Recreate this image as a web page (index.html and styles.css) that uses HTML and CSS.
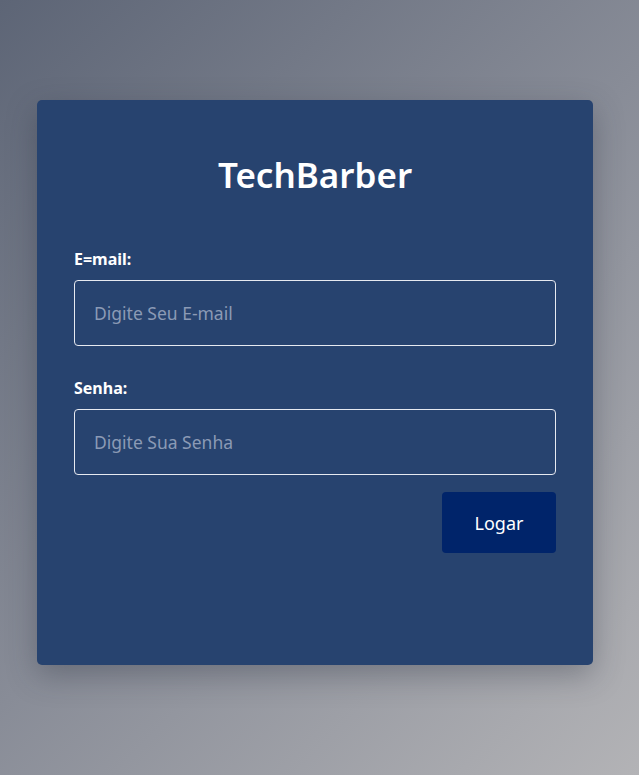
FILE: index.html
```html
<!DOCTYPE html>
<html lang="pt-BR">
<head>
<meta charset="utf-8">
<title>TechBarber</title>
<link rel="stylesheet" href="styles.css">
</head>
<body>
<main class="page">
  <form class="card">
    <h1 class="title">TechBarber</h1>
    <div class="field">
      <label class="label" for="email">E=mail:</label>
      <input class="input" id="email" type="text" placeholder="Digite Seu E-mail">
    </div>
    <div class="field">
      <label class="label" for="senha">Senha:</label>
      <input class="input" id="senha" type="password" placeholder="Digite Sua Senha">
    </div>
    <div class="actions">
      <button class="button" type="button">Logar</button>
    </div>
  </form>
</main>
</body>
</html>
```

FILE: styles.css
```css
html, body {
  margin: 0;
  height: 100%;
}
body {
  font-family: "Noto Sans", "Open Sans", sans-serif;
  background: linear-gradient(135deg, #5d6576 0%, #888c97 50%, #b3b3b6 100%);
  background-attachment: fixed;
}
.page {
  box-sizing: border-box;
  min-height: 100vh;
  padding: 100px 0 0 37px;
}
.card {
  box-sizing: border-box;
  width: 556px;
  height: 565px;
  background: #27436f;
  border-radius: 5px;
  box-shadow: 0 10px 30px rgba(40, 45, 60, 0.35);
  padding: 48px 37px 0 37px;
  display: flex;
  flex-direction: column;
}
.title {
  margin: 0 0 47px 0;
  text-align: center;
  color: #ffffff;
  font-size: 35px;
  font-weight: 600;
  line-height: 54px;
}
.field {
  display: flex;
  flex-direction: column;
  margin-bottom: 32px;
}
.label {
  color: #ffffff;
  font-size: 16px;
  font-weight: 700;
  line-height: 20px;
  margin-bottom: 11px;
}
.input {
  box-sizing: border-box;
  width: 100%;
  height: 66px;
  border: 1px solid #e6e9f0;
  border-radius: 4px;
  background: transparent;
  padding: 0 19px;
  font-family: inherit;
  font-size: 17.5px;
  color: #ffffff;
  outline: none;
}
.input::placeholder {
  color: #8b9ab5;
}
.actions {
  display: flex;
  justify-content: flex-end;
  margin-top: -15px;
}
.button {
  width: 114px;
  height: 61px;
  border: none;
  border-radius: 4px;
  background: #00246a;
  color: #ffffff;
  font-family: inherit;
  font-size: 18px;
  cursor: pointer;
}
```
